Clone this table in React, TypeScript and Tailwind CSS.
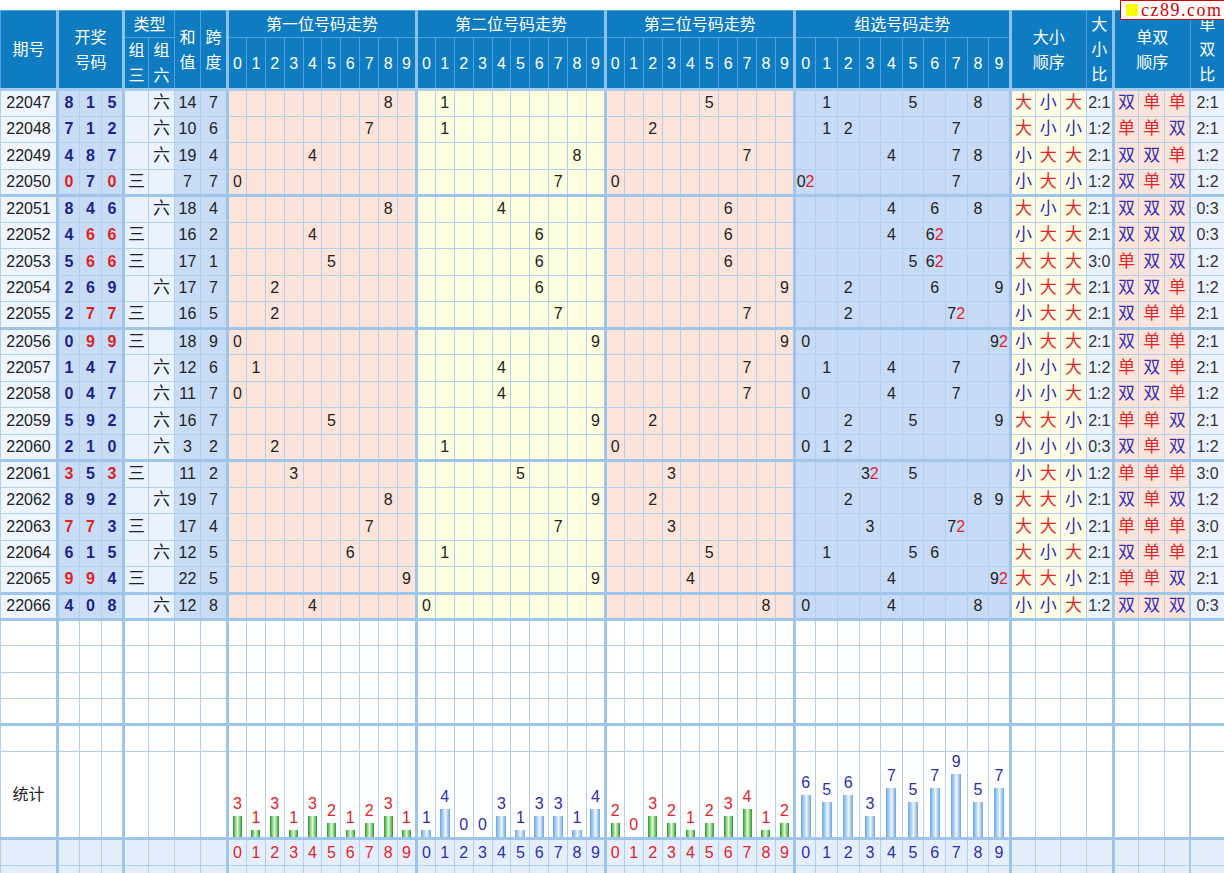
import React from 'react';

const raw: [string, string][] = [
  ['22047', '815'], ['22048', '712'], ['22049', '487'], ['22050', '070'], ['22051', '846'],
  ['22052', '466'], ['22053', '566'], ['22054', '269'], ['22055', '277'], ['22056', '099'],
  ['22057', '147'], ['22058', '047'], ['22059', '592'], ['22060', '210'], ['22061', '353'],
  ['22062', '892'], ['22063', '773'], ['22064', '615'], ['22065', '994'], ['22066', '408'],
];

const data = raw.map(([id, s]) => {
  const n = s.split('').map(Number);
  const counts = Array(10).fill(0) as number[];
  n.forEach((d) => counts[d]++);
  const zu3 = counts.some((c) => c >= 2);
  const sum = n[0] + n[1] + n[2];
  const span = Math.max(...n) - Math.min(...n);
  return { id, n, counts, zu3, sum, span };
});

const COLS: string[] = [
  'w-[57px]', 'w-[22px]', 'w-[22px]', 'w-[22px]', 'w-[25px]', 'w-[26px]', 'w-[26px]', 'w-[27px]',
  ...Array(30).fill('w-[18.9px]'),
  ...Array(10).fill('w-[21.6px]'),
  'w-[25.3px]', 'w-[25.3px]', 'w-[25.3px]', 'w-[27px]',
  'w-[25.7px]', 'w-[25.7px]', 'w-[25.7px]', 'w-[34px]',
];

const THICK = new Set([1, 4, 8, 18, 28, 38, 48, 52]);

const bgOf = (i: number) => {
  if (i === 0) return 'bg-[#eef5fd]';
  if (i <= 3) return 'bg-[#c8dcf6]';
  if (i <= 5) return 'bg-[#eaf3fd]';
  if (i <= 7) return 'bg-[#c8dcf6]';
  if (i <= 17) return 'bg-[#fde4db]';
  if (i <= 27) return 'bg-[#fefee0]';
  if (i <= 37) return 'bg-[#fde4db]';
  if (i <= 47) return 'bg-[#c7dbf7]';
  if (i <= 50) return 'bg-[#fefde3]';
  if (i === 51) return 'bg-[#eaf3fd]';
  if (i <= 54) return 'bg-[#fde4db]';
  return 'bg-[#eaf3fd]';
};

const cellCls = (i: number, bg: string, thickBottom: boolean) =>
  [
    'border border-[#b1d0ee] p-0 text-center align-middle whitespace-nowrap leading-[20px]',
    THICK.has(i) ? 'border-l-[3px] border-l-[#9fc6ea]' : '',
    i === 55 ? 'border-l-[2px] border-l-[#a7cbec]' : '',
    thickBottom ? 'border-b-[3px] border-b-[#9fc6ea]' : '',
    bg,
  ].join(' ');

const RED = 'text-[#e0242b]';
const BLUE = 'text-[#2d2db4]';

function HeadCell({
  children,
  rowSpan,
  colSpan,
  thick,
  bottom,
}: {
  children: React.ReactNode;
  rowSpan?: number;
  colSpan?: number;
  thick?: boolean;
  bottom?: boolean;
}) {
  return (
    <th
      rowSpan={rowSpan}
      colSpan={colSpan}
      className={[
        'border border-[#4fa2db] bg-[#0f7cc2] p-0 text-center align-middle font-normal text-white text-[16px] leading-[25px]',
        thick ? 'border-l-[3px] border-l-[#8fc0ea]' : '',
        bottom ? 'border-b-[3px] border-b-[#a6cdef]' : '',
      ].join(' ')}
    >
      {children}
    </th>
  );
}

export default function App() {
  const digits = [0, 1, 2, 3, 4, 5, 6, 7, 8, 9];
  const secCounts = [0, 1, 2].map((p) => digits.map((d) => data.filter((r) => r.n[p] === d).length));
  const zuCounts = digits.map((d) => secCounts[0][d] + secCounts[1][d] + secCounts[2][d]);
  const allCounts = [secCounts[0], secCounts[1], secCounts[2], zuCounts];

  const dataRows = data.map((r, ri) => {
    const cells: React.ReactNode[] = Array(56).fill('');
    cells[0] = <span className="text-[#222] text-[16px]">{r.id}</span>;
    for (let k = 0; k < 3; k++) {
      const dup = r.counts[r.n[k]] > 1;
      cells[1 + k] = (
        <span className={`font-bold text-[16px] ${dup ? 'text-[#e01e1e]' : 'text-[#1c1f8a]'}`}>{r.n[k]}</span>
      );
    }
    cells[4] = r.zu3 ? <span className="text-[17px] text-[#222]">三</span> : '';
    cells[5] = !r.zu3 ? <span className="text-[17px] text-[#222]">六</span> : '';
    cells[6] = <span className="text-[16px] text-[#222]">{r.sum}</span>;
    cells[7] = <span className="text-[16px] text-[#222]">{r.span}</span>;
    for (let p = 0; p < 3; p++) {
      cells[8 + p * 10 + r.n[p]] = <span className="text-[16px] text-[#222]">{r.n[p]}</span>;
    }
    digits.forEach((d) => {
      if (r.counts[d] > 0) {
        cells[38 + d] = (
          <span className="text-[16px] text-[#222]">
            {d}
            {r.counts[d] > 1 && <span className={RED}>{r.counts[d]}</span>}
          </span>
        );
      }
    });
    let big = 0;
    let odd = 0;
    r.n.forEach((d, k) => {
      const isBig = d >= 5;
      const isOdd = d % 2 === 1;
      if (isBig) big++;
      if (isOdd) odd++;
      cells[48 + k] = <span className={`text-[17px] ${isBig ? RED : BLUE}`}>{isBig ? '大' : '小'}</span>;
      cells[52 + k] = <span className={`text-[17px] ${isOdd ? RED : BLUE}`}>{isOdd ? '单' : '双'}</span>;
    });
    cells[51] = <span className="text-[16px] text-[#333]">{`${big}:${3 - big}`}</span>;
    cells[55] = <span className="text-[16px] text-[#333]">{`${odd}:${3 - odd}`}</span>;
    const tb = ri === 3 || ri === 8 || ri === 13 || ri === 18 || ri === 19;
    return (
      <tr key={r.id} className="h-[26.5px]">
        {cells.map((c, i) => (
          <td key={i} className={cellCls(i, bgOf(i), tb)}>
            {c}
          </td>
        ))}
      </tr>
    );
  });

  const blankRow = (key: string, thickBottom: boolean, h: string) => (
    <tr key={key} className={h}>
      {Array.from({ length: 56 }).map((_, i) => (
        <td key={i} className={cellCls(i, 'bg-white', thickBottom)} />
      ))}
    </tr>
  );

  return (
    <div className="relative w-[1224px] h-[873px] overflow-hidden bg-white pt-[10px] font-['Liberation_Sans','Noto_Sans_CJK_SC',sans-serif]">
      <table className="table-fixed border-collapse w-[1224px]">
        <colgroup>
          {COLS.map((c, i) => (
            <col key={i} className={c} />
          ))}
        </colgroup>
        <thead>
          <tr className="h-[27px]">
            <HeadCell rowSpan={2} bottom>期号</HeadCell>
            <HeadCell rowSpan={2} colSpan={3} thick bottom>
              开奖
              <br />
              号码
            </HeadCell>
            <HeadCell colSpan={2} thick>类型</HeadCell>
            <HeadCell rowSpan={2} bottom>
              和<br />值
            </HeadCell>
            <HeadCell rowSpan={2} bottom>
              跨<br />度
            </HeadCell>
            <HeadCell colSpan={10} thick>第一位号码走势</HeadCell>
            <HeadCell colSpan={10} thick>第二位号码走势</HeadCell>
            <HeadCell colSpan={10} thick>第三位号码走势</HeadCell>
            <HeadCell colSpan={10} thick>组选号码走势</HeadCell>
            <HeadCell rowSpan={2} colSpan={3} thick bottom>
              大小
              <br />
              顺序
            </HeadCell>
            <HeadCell rowSpan={2} bottom>
              大<br />小<br />比
            </HeadCell>
            <HeadCell rowSpan={2} colSpan={3} thick bottom>
              单双
              <br />
              顺序
            </HeadCell>
            <HeadCell rowSpan={2} bottom>
              单<br />双<br />比
            </HeadCell>
          </tr>
          <tr className="h-[52px]">
            <HeadCell thick bottom>
              组<br />三
            </HeadCell>
            <HeadCell bottom>
              组<br />六
            </HeadCell>
            {[0, 1, 2, 3].map((s) =>
              digits.map((d) => (
                <HeadCell key={`${s}-${d}`} thick={d === 0} bottom>
                  {d}
                </HeadCell>
              )),
            )}
          </tr>
        </thead>
        <tbody>
          {dataRows}
          {blankRow('b1', false, 'h-[26.3px]')}
          {blankRow('b2', false, 'h-[26.3px]')}
          {blankRow('b3', false, 'h-[26.3px]')}
          {blankRow('b4', true, 'h-[26.3px]')}
          {blankRow('b5', false, 'h-[27px]')}
          <tr className="h-[87px]">
            {Array.from({ length: 56 }).map((_, i) => {
              if (i === 0) {
                return (
                  <td key={i} className={cellCls(i, 'bg-white', true)}>
                    <span className="text-[16px] text-[#222]">统计</span>
                  </td>
                );
              }
              if (i >= 8 && i <= 47) {
                const s = Math.floor((i - 8) / 10);
                const d = (i - 8) % 10;
                const c = allCounts[s][d];
                const green = s % 2 === 0;
                return (
                  <td key={i} className={`${cellCls(i, 'bg-white', true)} !align-bottom`}>
                    <div className="flex flex-col items-center">
                      <span className={`text-[16px] leading-[18px] mb-[3px] ${green ? RED : BLUE}`}>{c}</span>
                      {c > 0 && (
                        <div
                          className={
                            green
                              ? 'w-[9px] bg-[linear-gradient(90deg,#2b942b_0%,#7fcf7a_25%,#e6f8e2_50%,#7fcf7a_75%,#2b942b_100%)]'
                              : 'w-[10px] bg-[linear-gradient(90deg,#6aa6df_0%,#c4def7_40%,#eef6ff_55%,#6aa6df_100%)]'
                          }
                          style={{ height: c * 7 }}
                        />
                      )}
                    </div>
                  </td>
                );
              }
              return <td key={i} className={cellCls(i, 'bg-white', true)} />;
            })}
          </tr>
          <tr className="h-[27px]">
            {Array.from({ length: 56 }).map((_, i) => {
              if (i >= 8 && i <= 47) {
                const s = Math.floor((i - 8) / 10);
                const d = (i - 8) % 10;
                return (
                  <td key={i} className={cellCls(i, 'bg-[#e4effb]', false)}>
                    <span className={`text-[16px] ${s % 2 === 0 ? RED : BLUE}`}>{d}</span>
                  </td>
                );
              }
              return <td key={i} className={cellCls(i, 'bg-[#e4effb]', false)} />;
            })}
          </tr>
          <tr className="h-[27px]">
            {Array.from({ length: 56 }).map((_, i) => (
              <td key={i} className={cellCls(i, 'bg-[#e4effb]', false)} />
            ))}
          </tr>
        </tbody>
      </table>
      <div className="absolute top-0 left-[1120px] w-[110px] h-[20px] flex items-center gap-[3px] bg-white border border-[#cc0000] pl-[5px]">
        <div className="w-[12px] h-[12px] bg-[#ffff00] shrink-0" />
        <span className="text-[#d40000] text-[18px] leading-none font-['Liberation_Serif',serif] tracking-[1.5px]">
          cz89.com
        </span>
      </div>
    </div>
  );
}
